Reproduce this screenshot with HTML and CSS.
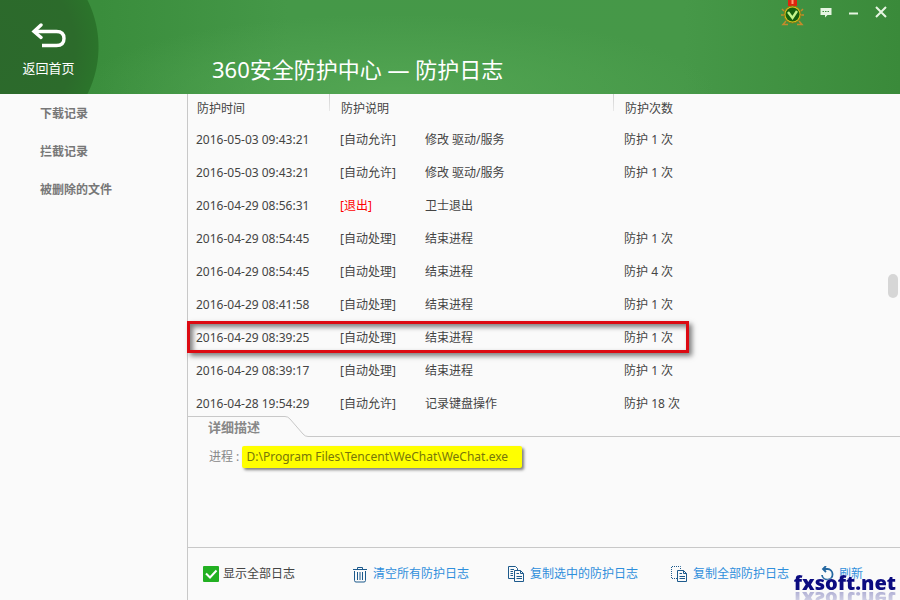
FILE: index.html
```
<!DOCTYPE html>
<html lang="zh-CN">

<head>
    <meta charset="UTF-8">
    <title>360安全防护中心</title>
    <link rel="stylesheet" href="styles.css">
</head>

<body>
    <div class="app">
        <header class="header">
            <button class="back" type="button">
                <svg width="36" height="26" viewBox="0 0 36 26" fill="none" stroke="#fff" stroke-width="3.4">
                    <path d="M10 2L3 8.500L10 14.500" stroke-linecap="round" />
                    <path d="M3 8.500H25.500C30.500 8.500 33 11 33 15.500S30.500 22.500 25.500 22.500H11" />
                </svg>
                <span>返回首页</span>
            </button>
            <h1 class="title">360安全防护中心 — 防护日志</h1>
            <div class="win_btns">
                <button type="button" class="medal" aria-label="勋章">
                    <svg width="24" height="28" viewBox="0 0 24 28">
                        <rect x="7" y="0" width="9" height="6" fill="#e0240f" />
                        <path d="M11.500 0V4" stroke="#ff9a72" stroke-width="2" />
                        <path d="M3 11L1 9M20 11L22 9M3 15H0M20 15H23M5 21L2 24.500H7M18 21L21 24.500H16" fill="none" stroke="#c58a2b" stroke-width="1.500" />
                        <circle cx="11.500" cy="14.500" r="8.500" fill="#d9c51f" stroke="#8a7a18" stroke-width="1" />
                        <circle cx="11.500" cy="14.500" r="7" fill="#17620f" />
                        <path d="M7 12L11.500 18L16 11" fill="none" stroke="#c4f58a" stroke-width="2.400" />
                    </svg>
                </button>
                <button type="button" class="msg" aria-label="反馈">
                    <svg width="12" height="10" viewBox="0 0 12 10">
                        <path d="M0.500 0H11.500V7H7.500L5 9.500V7H0.500Z" fill="#e6f5e2" />
                        <path d="M2.500 3.500H10" stroke="#3f8f40" stroke-width="1" stroke-dasharray="1.500 1" />
                    </svg>
                </button>
                <button type="button" class="min" aria-label="最小化">
                    <svg width="9" height="3" viewBox="0 0 9 3"><path d="M0 1.500H9" stroke="#e6f5e2" stroke-width="2" /></svg>
                </button>
                <button type="button" class="close" aria-label="关闭">
                    <svg width="12" height="12" viewBox="0 0 12 12"><path d="M1 1L11 11M11 1L1 11" stroke="#e6f5e2" stroke-width="2" /></svg>
                </button>
            </div>
        </header>

        <div class="content">
            <nav class="side">
                <a href="#">下载记录</a>
                <a href="#">拦截记录</a>
                <a href="#">被删除的文件</a>
            </nav>

            <main class="main">
                <div class="log">
                    <table>
                        <colgroup>
                            <col class="c_time">
                            <col class="c_type">
                            <col class="c_desc">
                            <col>
                        </colgroup>
                        <thead>
                            <tr>
                                <th>防护时间</th>
                                <th colspan="2">防护说明</th>
                                <th>防护次数</th>
                            </tr>
                        </thead>
                        <tbody>
                            <tr><td>2016-05-03 09:43:21</td><td>[自动允许]</td><td>修改 驱动/服务</td><td>防护 1 次</td></tr>
                            <tr><td>2016-05-03 09:43:21</td><td>[自动允许]</td><td>修改 驱动/服务</td><td>防护 1 次</td></tr>
                            <tr><td>2016-04-29 08:56:31</td><td class="red">[退出]</td><td>卫士退出</td><td></td></tr>
                            <tr><td>2016-04-29 08:54:45</td><td>[自动处理]</td><td>结束进程</td><td>防护 1 次</td></tr>
                            <tr><td>2016-04-29 08:54:45</td><td>[自动处理]</td><td>结束进程</td><td>防护 4 次</td></tr>
                            <tr><td>2016-04-29 08:41:58</td><td>[自动处理]</td><td>结束进程</td><td>防护 1 次</td></tr>
                            <tr class="selected"><td>2016-04-29 08:39:25<i class="mark"></i></td><td>[自动处理]</td><td>结束进程</td><td>防护 1 次</td></tr>
                            <tr><td>2016-04-29 08:39:17</td><td>[自动处理]</td><td>结束进程</td><td>防护 1 次</td></tr>
                            <tr><td>2016-04-28 19:54:29</td><td>[自动允许]</td><td>记录键盘操作</td><td>防护 18 次</td></tr>
                        </tbody>
                    </table>
                    <div class="thumb"></div>
                </div>

                <section class="detail">
                    <div class="tab_row">
                        <h2 class="tab">
                            <svg width="120" height="21" viewBox="0 0 120 21"><path d="M0 0.500H97Q100 0.500 102 3L115 18Q117 20.500 120 20.500" fill="none" stroke="#c8c8c8" /></svg>
                            <span>详细描述</span>
                        </h2>
                        <div class="tab_line"></div>
                    </div>
                    <p class="process">进程 : <mark>D:\Program Files\Tencent\WeChat\WeChat.exe</mark></p>
                </section>

                <footer class="footer">
                    <label class="show_all"><input type="checkbox" checked>显示全部日志</label>
                    <button type="button" class="act clear">
                        <svg width="16" height="17" viewBox="0 0 16 17" fill="none" stroke="#1d5a8c">
                            <path d="M1 3.500H15M5.500 3.500V1.500H10.500V3.500M2.500 5V14.500Q2.500 16 4 16H12Q13.500 16 13.500 14.500V5M5.500 6V14M8 6V14M10.500 6V14" />
                        </svg>
                        清空所有防护日志
                    </button>
                    <button type="button" class="act copy">
                        <svg width="17" height="17" viewBox="0 0 17 17" fill="none" stroke="#1d5a8c">
                            <path d="M6 12.500H0.500V0.500H7.500L9.500 2.500V4M2.500 3.500H6M2.500 5.500H5M2.500 7.500H5M2.500 9.500H5" />
                            <path d="M6.500 4.500H12.500L15.500 7.500V15.500H6.500ZM12.500 4.500V7.500H15.500M8.500 7.500H11M8.500 10.500H14M8.500 12.500H14" />
                        </svg>
                        复制选中的防护日志
                    </button>
                    <button type="button" class="act copy_all">
                        <svg width="17" height="17" viewBox="0 0 17 17" fill="none" stroke="#1d5a8c">
                            <path d="M6 12.500H0.500V0.500H9.500V4" stroke-dasharray="1 1" />
                            <path d="M6.500 4.500H12.500L15.500 7.500V15.500H6.500ZM12.500 4.500V7.500H15.500M8.500 7.500H11M8.500 10.500H14M8.500 12.500H14" />
                        </svg>
                        复制全部防护日志
                    </button>
                    <button type="button" class="act refresh">
                        <svg width="14" height="16" viewBox="0 0 14 16" fill="none" stroke="#2467a0" stroke-width="1.800">
                            <path d="M4 3H7.500A5.300 5.300 0 1 1 2 9" />
                            <path d="M6 0L3 3L6 6" />
                        </svg>
                        刷新
                    </button>
                </footer>
            </main>
        </div>
        <div class="watermark">fxsoft.net</div>
    </div>
</body>

</html>
```
FILE: styles.css
```
* {
    box-sizing: border-box;
}

body {
    margin: 0;
    font-family: "Noto Sans", "Noto Sans CJK SC", sans-serif;
    font-size: 12px;
    line-height: 18px;
    color: #444;
    background-color: #fafafa;
}

button {
    padding: 0;
    border: 0;
    background: none;
    font: inherit;
    color: inherit;
    cursor: pointer;
}

svg {
    display: block;
    flex: none;
}

.app {
    position: relative;
    display: flex;
    flex-direction: column;
    height: 100vh;
    overflow: hidden;
}

/* header */
.header {
    display: flex;
    flex: none;
    height: 94px;
    color: #fff;
    background:
        radial-gradient(circle at -7px 47px, #2c692c 0, #2c6b2b 82px, #2b742b 105px, transparent 106px),
        radial-gradient(ellipse 320px 80px at 44% 100%, #53a653 0, rgba(83, 166, 83, 0) 100%),
        linear-gradient(to right, #3a8d3c 11%, #459848 32%, #469848 76%, #3a8a3a 100%);
}

.back {
    display: flex;
    flex-direction: column;
    align-items: center;
    flex: none;
    width: 97px;
    padding-top: 23px;
    font-size: 13px;
}

.back span {
    margin-top: 10px;
}

.title {
    flex: 1;
    margin: 53px 0 0 115px;
    font-size: 22px;
    font-weight: 400;
    line-height: 32px;
}

.win_btns {
    display: flex;
    align-items: flex-start;
    padding-right: 13px;
}

.msg {
    margin: 8px 0 0 15px;
}

.min {
    margin: 12px 0 0 17px;
}

.close {
    margin: 6px 0 0 17px;
}

/* content */
.content {
    display: flex;
    flex: 1;
    min-height: 0;
}

.side {
    display: flex;
    flex-direction: column;
    flex: none;
    gap: 20px;
    width: 187px;
    padding: 11px 0 0 40px;
}

.side a {
    font-weight: bold;
    color: #777;
    text-decoration: none;
}

.main {
    display: flex;
    flex-direction: column;
    flex: 1;
    min-width: 0;
    border-left: 1px solid #c8c8c8;
}

.log {
    position: relative;
    flex: 1;
    min-height: 0;
}

table {
    width: 100%;
    table-layout: fixed;
    border-collapse: collapse;
}

.c_time {
    width: 142px;
}

.c_type {
    width: 85px;
}

.c_desc {
    width: 199px;
}

th {
    height: 29px;
    padding: 0 0 0 11px;
    font-weight: normal;
    text-align: left;
    background: linear-gradient(#d0d0d0, #e8e8e8) right top / 1px 17px no-repeat;
}

th:first-child {
    padding-left: 9px;
}

th:last-child {
    background: none;
}

td {
    height: 33px;
    padding: 0 0 0 10px;
    white-space: nowrap;
}

td:first-child {
    padding-left: 8px;
}

.red {
    color: #f00;
}

.selected {
    position: relative;
}

.mark {
    position: absolute;
    top: 0;
    left: -1px;
    width: 502px;
    height: 32px;
    border: 3px solid #dc0a12;
    box-shadow: 3px 3px 5px rgba(0, 0, 0, 0.5), inset 3px 3px 5px rgba(0, 0, 0, 0.5);
}

.thumb {
    position: absolute;
    top: 180px;
    right: 2px;
    width: 10px;
    height: 24px;
    border-radius: 5px;
    background-color: #d6d6d6;
}

/* detail */
.detail {
    position: relative;
    flex: none;
    height: 131px;
    background-color: #fafafa;
}

.tab_row {
    display: flex;
}

.tab {
    position: relative;
    width: 120px;
    margin: 0;
    font-size: 13px;
    line-height: 21px;
    color: #888;
}

.tab span {
    position: absolute;
    top: 1px;
    left: 20px;
}

.tab_line {
    flex: 1;
    border-bottom: 1px solid #c8c8c8;
}

.process {
    margin: 9px 0 0 21px;
    line-height: 22px;
    color: #888;
}

.process mark {
    display: inline-block;
    padding: 0 14px 0 4px;
    border-radius: 2px;
    color: #77770a;
    background-color: #ff0;
    box-shadow: 2px 2px 3px rgba(0, 0, 0, 0.5);
}

/* footer */
.footer {
    display: flex;
    align-items: center;
    flex: none;
    height: 53px;
    padding-left: 15px;
    border-top: 1px solid #c8c8c8;
    white-space: nowrap;
}

.show_all {
    display: flex;
    align-items: center;
    gap: 4px;
}

.show_all input {
    width: 16px;
    height: 16px;
    margin: 0;
    appearance: none;
    border-radius: 1px;
    background: #22b022 url("data:image/svg+xml,%3Csvg xmlns='http://www.w3.org/2000/svg' viewBox='0 0 16 16'%3E%3Cpath d='M3 7.500L7 11.500L13.500 4.500' fill='none' stroke='white' stroke-width='2'/%3E%3C/svg%3E");
}

.act {
    display: flex;
    align-items: center;
    gap: 5px;
    color: #2f8fdc;
}

.clear {
    margin-left: 57px;
}

.copy {
    margin-left: 39px;
}

.copy_all {
    margin-left: 33px;
}

.refresh {
    margin-left: 31px;
}

.watermark {
    position: absolute;
    right: 4px;
    bottom: 3px;
    font-family: "Noto Sans", sans-serif;
    font-size: 20px;
    font-weight: 900;
    line-height: 28px;
    color: #0b0b80;
    text-shadow: 0 0 2px #fff;
    -webkit-box-reflect: below -12px linear-gradient(transparent, rgba(0, 0, 0, 0.4));
}
```
